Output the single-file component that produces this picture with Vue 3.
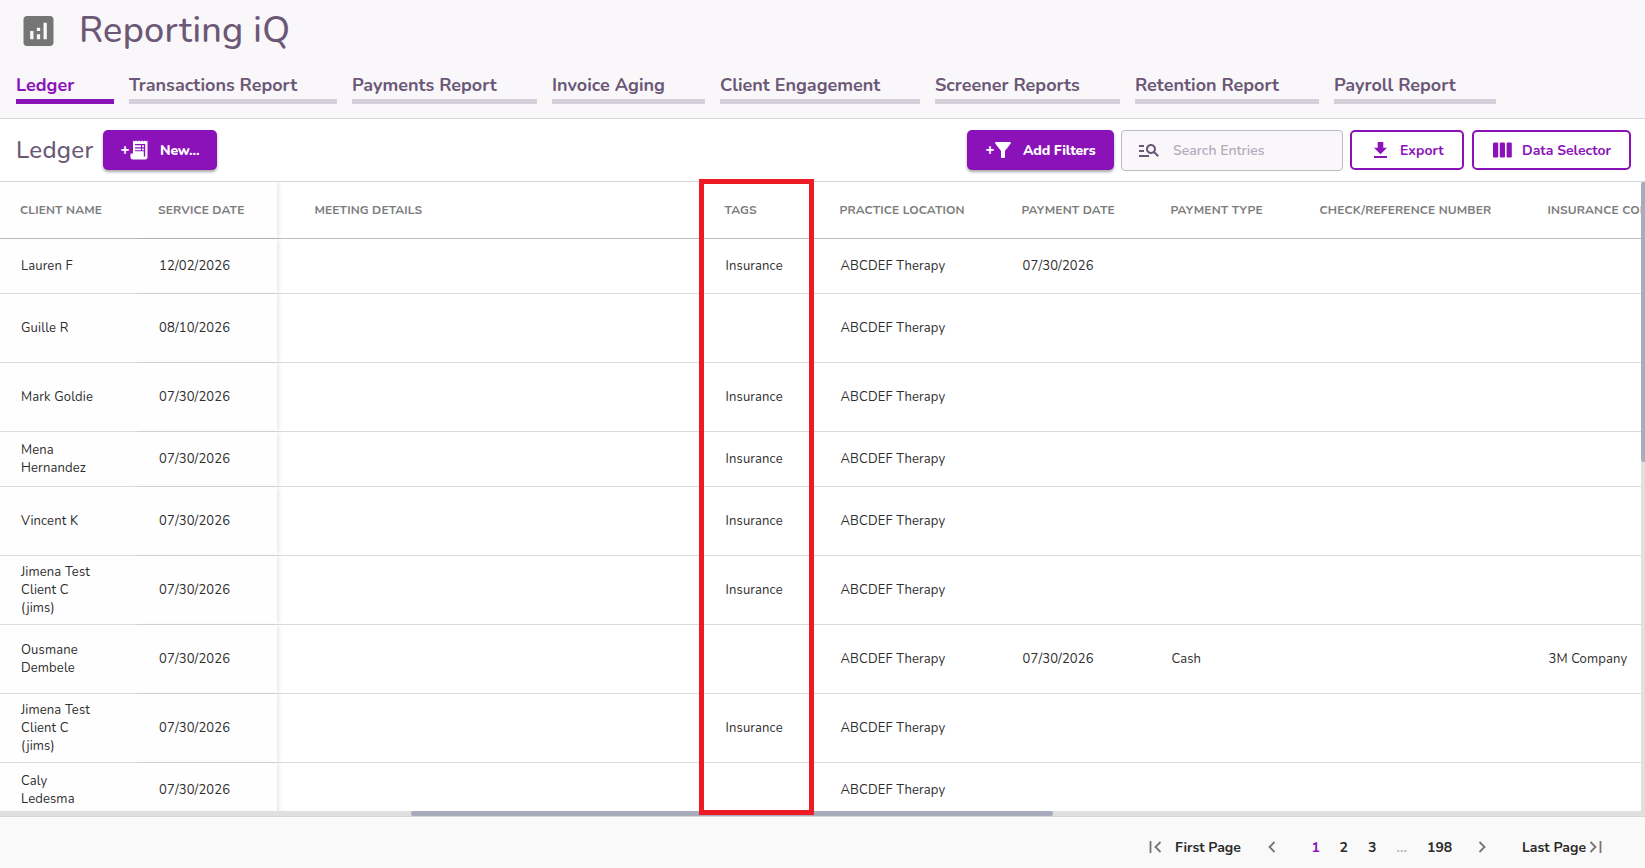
<script setup>
import { ref } from 'vue'

const activeTab = ref('Ledger')
const search = ref('')
const page = ref(1)

const tabs = [
    { name: 'Ledger', width: 98 },
    { name: 'Transactions Report', width: 208 },
    { name: 'Payments Report', width: 185 },
    { name: 'Invoice Aging', width: 153 },
    { name: 'Client Engagement', width: 200 },
    { name: 'Screener Reports', width: 185 },
    { name: 'Retention Report', width: 184 },
    { name: 'Payroll Report', width: 162 }
]

const columns = [
    { key: 'client', label: 'Client Name', sticky: true },
    { key: 'date', label: 'Service Date', sticky: true },
    { key: 'meeting', label: 'Meeting Details' },
    { key: 'tags', label: 'Tags' },
    { key: 'location', label: 'Practice Location' },
    { key: 'paymentDate', label: 'Payment Date' },
    { key: 'paymentType', label: 'Payment Type' },
    { key: 'reference', label: 'Check/Reference Number' },
    { key: 'insurance', label: 'Insurance Company' }
]

const location = 'ABCDEF Therapy'

const rows = [
    { client: 'Lauren F', date: '12/02/2026', tags: 'Insurance', location, paymentDate: '07/30/2026', short: true },
    { client: 'Guille R', date: '08/10/2026', location },
    { client: 'Mark Goldie', date: '07/30/2026', tags: 'Insurance', location },
    { client: 'Mena Hernandez', date: '07/30/2026', tags: 'Insurance', location, short: true },
    { client: 'Vincent K', date: '07/30/2026', tags: 'Insurance', location },
    { client: 'Jimena Test Client C (jims)', date: '07/30/2026', tags: 'Insurance', location },
    { client: 'Ousmane Dembele', date: '07/30/2026', location, paymentDate: '07/30/2026', paymentType: 'Cash', insurance: '3M Company' },
    { client: 'Jimena Test Client C (jims)', date: '07/30/2026', tags: 'Insurance', location },
    { client: 'Caly Ledesma', date: '07/30/2026', location, short: true }
]
</script>

<template>
    <div class="page">
        <header class="header">
            <div class="title">
                <svg class="title-icon" viewBox="3 3 18 18">
                    <path d="M19 3H5c-1.100 0-2 .9-2 2v14c0 1.100.9 2 2 2h14c1.100 0 2-.9 2-2V5c0-1.100-.9-2-2-2zM9 17H7v-5h2v5zm4 0h-2v-3h2v3zm0-5h-2v-2h2v2zm4 5h-2V7h2v10z" />
                </svg>
                <h1>Reporting iQ</h1>
            </div>
            <nav class="tabs">
                <a
                    v-for="tab in tabs"
                    :key="tab.name"
                    class="tab"
                    :class="{ active: tab.name === activeTab }"
                    :style="{ width: tab.width + 'px' }"
                    @click="activeTab = tab.name"
                >{{ tab.name }}</a>
            </nav>
        </header>

        <div class="toolbar">
            <h2>Ledger</h2>
            <button class="btn filled new">
                <span class="plus">+</span>
                <svg width="18" height="20" viewBox="0 0 18 20">
                    <path d="M3 .5l1.500 1L6 .5l1.500 1L9 .5l1.500 1L12 .5l1.500 1L15 .5l1.500 1 1-1V17a2.500 2.500 0 0 1-2.500 2.500H3A2.500 2.500 0 0 1 .5 17v-3.500H3z" />
                    <path class="cut" d="M5 4h10.200v12.500h-1.400V13H5z" />
                    <path d="M5 5.300h6v2H5zM12 5.300h1.800v2H12zM5 8.500h6v1.700H5zM12 8.500h1.800v1.700H12zM5 11.200h8.800V13.200H5z" />
                </svg>
                <span class="label">New...</span>
            </button>

            <div class="actions">
                <button class="btn filled filters">
                    <span class="plus">+</span>
                    <svg width="16" height="16" viewBox="4 4 16 16">
                        <path d="M4.250 5.610C6.270 8.200 10 13 10 13v6c0 .55.45 1 1 1h2c.55 0 1-.45 1-1v-6s3.720-4.800 5.740-7.390A.998.998 0 0 0 18.950 4H5.040c-.83 0-1.300.95-.79 1.610z" />
                    </svg>
                    <span class="label">Add Filters</span>
                </button>
                <div class="search">
                    <svg width="24" height="24" viewBox="0 0 24 24">
                        <path d="M7 9H2V7h5v2zm0 3H2v2h5v-2zm13.590 7l-3.830-3.830c-.8.52-1.740.83-2.760.83-2.760 0-5-2.240-5-5s2.240-5 5-5 5 2.240 5 5c0 1.020-.31 1.960-.83 2.750L22 17.590 20.590 19zM17 11c0-1.650-1.350-3-3-3s-3 1.350-3 3 1.350 3 3 3 3-1.350 3-3zM2 19h10v-2H2v2z" />
                    </svg>
                    <input v-model="search" placeholder="Search Entries" />
                </div>
                <button class="btn outlined export">
                    <svg width="13" height="16" viewBox="5 3 14 17" preserveAspectRatio="none">
                        <path d="M19 9h-4V3H9v6H5l7 7 7-7zM5 18v2h14v-2H5z" />
                    </svg>
                    <span class="label">Export</span>
                </button>
                <button class="btn outlined selector">
                    <svg width="19" height="16" viewBox="0 0 19 16">
                        <rect x="0" y="0.500" width="5.200" height="15" rx="1.200" />
                        <rect x="6.800" y="0.500" width="5.200" height="15" rx="1.200" />
                        <rect x="13.600" y="0.500" width="5.200" height="15" rx="1.200" />
                    </svg>
                    <span class="label">Data Selector</span>
                </button>
            </div>
        </div>

        <div class="table-wrap">
            <div class="table">
                <div class="row head">
                    <div v-for="col in columns" :key="col.key" class="cell" :class="{ sticky: col.sticky }">{{ col.label }}</div>
                </div>
                <div v-for="(row, i) in rows" :key="i" class="row" :class="{ short: row.short }">
                    <div v-for="col in columns" :key="col.key" class="cell" :class="[col.key, { sticky: col.sticky }]">{{ row[col.key] }}</div>
                </div>
            </div>
            <div class="v-track"><div class="v-thumb"></div></div>
            <div class="highlight"></div>
        </div>
        <div class="h-track"><div class="h-thumb"></div></div>

        <footer class="pagination">
            <svg width="13" height="12" viewBox="0 0 13 12"><path d="M1.500 0v12M11.500 1L6.500 6l5 5" /></svg>
            <span class="first">First Page</span>
            <svg class="prev" width="8" height="12" viewBox="0 0 8 12"><path d="M6.500 1L1.500 6l5 5" /></svg>
            <span v-for="n in 3" :key="n" class="num" :class="{ current: n === page }" @click="page = n">{{ n }}</span>
            <span class="dots">...</span>
            <span class="total">198</span>
            <svg class="next" width="8" height="12" viewBox="0 0 8 12"><path d="M1.500 1l5 5-5 5" /></svg>
            <span class="last">Last Page</span>
            <svg width="13" height="12" viewBox="0 0 13 12"><path d="M1.500 1l5 5-5 5M11.500 0v12" /></svg>
        </footer>
    </div>
</template>

<style>
body {
    margin: 0;
    overflow: hidden;
}
</style>

<style scoped>
.page {
    display: flex;
    flex-direction: column;
    width: 1645px;
    height: 868px;
    overflow: hidden;
    background: #fff;
    color: #2e2e2e;
    font-family: Nunito, Lato, "Open Sans", sans-serif;
}

.page * {
    box-sizing: border-box;
}

.header {
    height: 119px;
    flex: none;
    background: #f9f7fa;
    border-bottom: 1px solid #d6d6d6;
}

.title {
    display: flex;
    align-items: center;
    height: 62px;
    padding-left: 23px;
}

.title-icon {
    width: 31px;
    height: 30px;
    fill: #757575;
}

h1 {
    margin: 0 0 1px 25px;
    color: #6b5876;
    font-size: 36px;
    font-weight: 500;
    letter-spacing: 0.3px;
}

.tabs {
    display: flex;
    gap: 15px;
    padding-left: 16px;
}

.tab {
    flex: none;
    height: 42px;
    padding-top: 10px;
    border-bottom: 5px solid #d4d0da;
    color: #6b5876;
    font-size: 18px;
    font-weight: 700;
    line-height: 26px;
    white-space: nowrap;
}

.tab.active {
    color: #8b12b9;
    border-color: #8b12b9;
}

.toolbar {
    display: flex;
    align-items: flex-start;
    height: 63px;
    flex: none;
    padding: 11px 14px 0 16px;
    border-bottom: 1px solid #d6d6d6;
}

h2 {
    width: 87px;
    margin: 0;
    color: #6b5876;
    font-size: 24px;
    font-weight: 500;
    letter-spacing: 0.3px;
    line-height: 41px;
}

.actions {
    display: flex;
    margin-left: auto;
}

.btn {
    display: flex;
    align-items: center;
    height: 40px;
    padding: 0;
    border: 0;
    border-radius: 5px;
    font-family: inherit;
    font-size: 14px;
    font-weight: 700;
    white-space: nowrap;
}

.filled {
    background: #8b12b9;
    color: #fff;
    fill: #fff;
    font-weight: 800;
    letter-spacing: -0.15px;
    box-shadow: 0 2px 3px rgba(0, 0, 0, 0.35);
}

.outlined {
    background: #fff;
    color: #8b12b9;
    fill: #8b12b9;
    border: 2px solid #8b12b9;
}

.plus {
    width: 10px;
    font-size: 15px;
}

.cut {
    fill: #8b12b9;
}

.new {
    width: 114px;
    padding-left: 17px;
}

.new .label {
    margin-left: 12px;
}

.filters {
    width: 147px;
    margin-right: 7px;
    padding-left: 18px;
}

.filters .label {
    margin-left: 12px;
}

.search {
    display: flex;
    align-items: center;
    width: 222px;
    height: 41px;
    margin-right: 7px;
    padding-left: 15px;
    background: #f9f7fa;
    border: 1px solid #bdbac0;
    border-radius: 4px;
    fill: #6b5876;
}

.search svg {
    margin-top: -1px;
}

.search input {
    width: 150px;
    margin-left: 12px;
    padding: 0;
    border: 0;
    outline: 0;
    background: none;
    color: #6b5876;
    font-family: inherit;
    font-size: 14px;
    font-weight: 600;
}

.search input::placeholder {
    color: #b5aabb;
}

.export {
    width: 114px;
    margin-right: 8px;
    padding-left: 22px;
}

.export .label {
    margin-left: 13px;
}

.selector {
    width: 159px;
    padding-left: 19px;
}

.selector .label {
    margin-left: 10px;
}

.table-wrap {
    position: relative;
    display: flex;
    height: 629px;
    flex: none;
}

.table {
    flex: 1;
    overflow: hidden;
}

.row {
    display: grid;
    grid-template-columns: 133px 144px 423px 115px 182px 149px 149px 228px 200px;
    height: 69px;
    border-bottom: 1px solid #dcdcdc;
}

.row.short {
    height: 55px;
}

.row.head {
    height: 57px;
    border-color: #bcbcbc;
}

.cell {
    display: flex;
    align-items: center;
    padding-left: 25.5px;
    font-size: 13px;
    line-height: 18px;
    letter-spacing: 0.14px;
}

.head .cell {
    padding-left: 24.5px;
    color: #7c7c7c;
    font-size: 12px;
    font-weight: 700;
    letter-spacing: 0.13px;
    text-transform: uppercase;
    white-space: nowrap;
}

.cell:first-child {
    padding-left: 21px;
    padding-right: 35px;
}

.head .cell:first-child {
    padding-left: 20px;
    padding-right: 0;
}

.cell:nth-child(2) {
    padding-left: 25px;
}

.head .cell:nth-child(2) {
    padding-left: 24px;
}

.head .cell:nth-child(3) {
    padding-left: 37.5px;
}

.sticky {
    background: #fefefe;
}

.sticky:nth-child(2) {
    box-shadow: 3px 0 4px -1px rgba(0, 0, 0, 0.1);
    border-left: 1px solid #fafafa;
}

.v-track {
    width: 4px;
    background: #e0e0e0;
}

.v-thumb {
    height: 280px;
    background: #a9aabb;
    border-radius: 3px 0 0 3px;
}

/* frame around the Tags column */
.highlight {
    position: absolute;
    top: -3px;
    left: 699px;
    width: 115px;
    height: 636px;
    border: 5px solid #ed1c24;
    z-index: 1;
}

.h-track {
    height: 6px;
    flex: none;
    padding-left: 411px;
    background: #e0e0e0;
    border-bottom: 1px solid #d6d6d6;
}

.h-thumb {
    width: 642px;
    height: 5px;
    background: #a9aabb;
    border-radius: 3px;
}

.pagination {
    display: flex;
    flex: 1;
    align-items: center;
    padding-left: 1149px;
    background: #f9f9f9;
    color: #2b2b2b;
    font-size: 14px;
    font-weight: 700;
    white-space: nowrap;
}

.pagination svg {
    flex: none;
    margin-top: 9px;
    fill: none;
    stroke: #757575;
    stroke-width: 1.800;
}

.pagination span {
    flex: none;
    margin-top: 9px;
}

.first {
    width: 92.5px;
    margin-left: 13px;
}

.prev {
    margin-right: 36px;
}

.num {
    width: 28px;
}

.num + .num {
    width: 28.500px;
}

.current {
    color: #8b12b9;
}

.dots {
    width: 30.5px;
    color: #b5b5b5;
}

.total {
    width: 51px;
}

.next {
    margin-right: 36px;
}

.last {
    width: 67px;
}
</style>
